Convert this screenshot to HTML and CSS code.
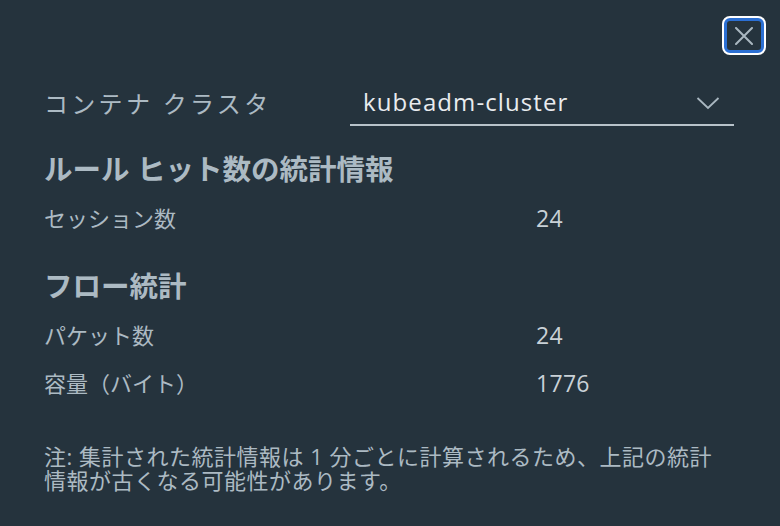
FILE: index.html
```html
<!DOCTYPE html>
<html lang="ja">
<head>
<meta charset="utf-8">
<link rel="stylesheet" href="styles.css">
</head>
<body>
<div class="modal">
  <div class="top">
    <button class="close" aria-label="閉じる">
      <svg width="18" height="18" viewBox="0 0 18 18"><path d="M1 1L17 17M17 1L1 17" stroke="#a9b7c0" stroke-width="2" fill="none" stroke-linecap="round"/></svg>
    </button>
  </div>
  <div class="field">
    <div class="field-label">コンテナ クラスタ</div>
    <div class="select">
      <span class="select-text">kubeadm-cluster</span>
      <svg class="chev" width="24" height="14" viewBox="0 0 24 14"><path d="M1.5 2L12 12L22.5 2" stroke="#a9b7c0" stroke-width="1.8" fill="none"/></svg>
    </div>
  </div>
  <h2 class="heading">ルール ヒット数の統計情報</h2>
  <div class="row"><span class="k">セッション数</span><span class="v">24</span></div>
  <h2 class="heading h2b">フロー統計</h2>
  <div class="row"><span class="k">パケット数</span><span class="v">24</span></div>
  <div class="row"><span class="k">容量（バイト）</span><span class="v">1776</span></div>
  <p class="note">注: 集計された統計情報は 1 分ごとに計算されるため、上記の統計情報が古くなる可能性があります。</p>
</div>
</body>
</html>
```

FILE: styles.css
```css
html, body {
  margin: 0;
  padding: 0;
  background: #25333d;
}
body {
  width: 780px;
  height: 526px;
  overflow: hidden;
  font-family: "Open Sans", "Noto Sans CJK JP", sans-serif;
  color: #acbac3;
}
.modal {
  padding: 18px 16px 0 44px;
}
.top {
  display: flex;
  justify-content: flex-end;
  height: 36px;
}
.close {
  width: 40px;
  height: 35px;
  box-sizing: border-box;
  border: 3px solid #2b6fd3;
  box-shadow: 0 0 0 2px #ffffff;
  border-radius: 6px;
  background: #25333d;
  display: flex;
  align-items: center;
  justify-content: center;
  padding: 0;
}
.field {
  display: flex;
  align-items: flex-end;
  margin-top: 32px;
}
.field-label {
  width: 306px;
  font-size: 24px;
  line-height: 34px;
  padding-bottom: 5px;
  letter-spacing: 3.3px;
}
.select {
  width: 384px;
  box-sizing: border-box;
  border-bottom: 2px solid #b8c3ca;
  display: flex;
  align-items: center;
  justify-content: space-between;
  padding: 0 14px 7px 13px;
  height: 40px;
}
.select-text {
  font-size: 24px;
  letter-spacing: 1.1px;
  color: #e9ecef;
}
.chev {
  margin-top: 2px;
}
.heading {
  margin: 25px 0 0 0;
  font-size: 28.5px;
  line-height: 36px;
  font-weight: 700;
  color: #acbac3;
}
.h2b {
  margin-top: 35px;
}
.row {
  display: flex;
  font-size: 22px;
  line-height: 30px;
  margin-top: 16px;
}
.row + .row {
  margin-top: 18px;
}
.k {
  width: 492px;
}
.v {
  color: #c9d1d7;
  font-size: 23px;
  letter-spacing: 0.3px;
}
.note {
  margin: 46px 0 0 0;
  width: 680px;
  font-size: 22px;
  line-height: 24px;
  letter-spacing: 0.5px;
  color: #acbac3;
}
```
